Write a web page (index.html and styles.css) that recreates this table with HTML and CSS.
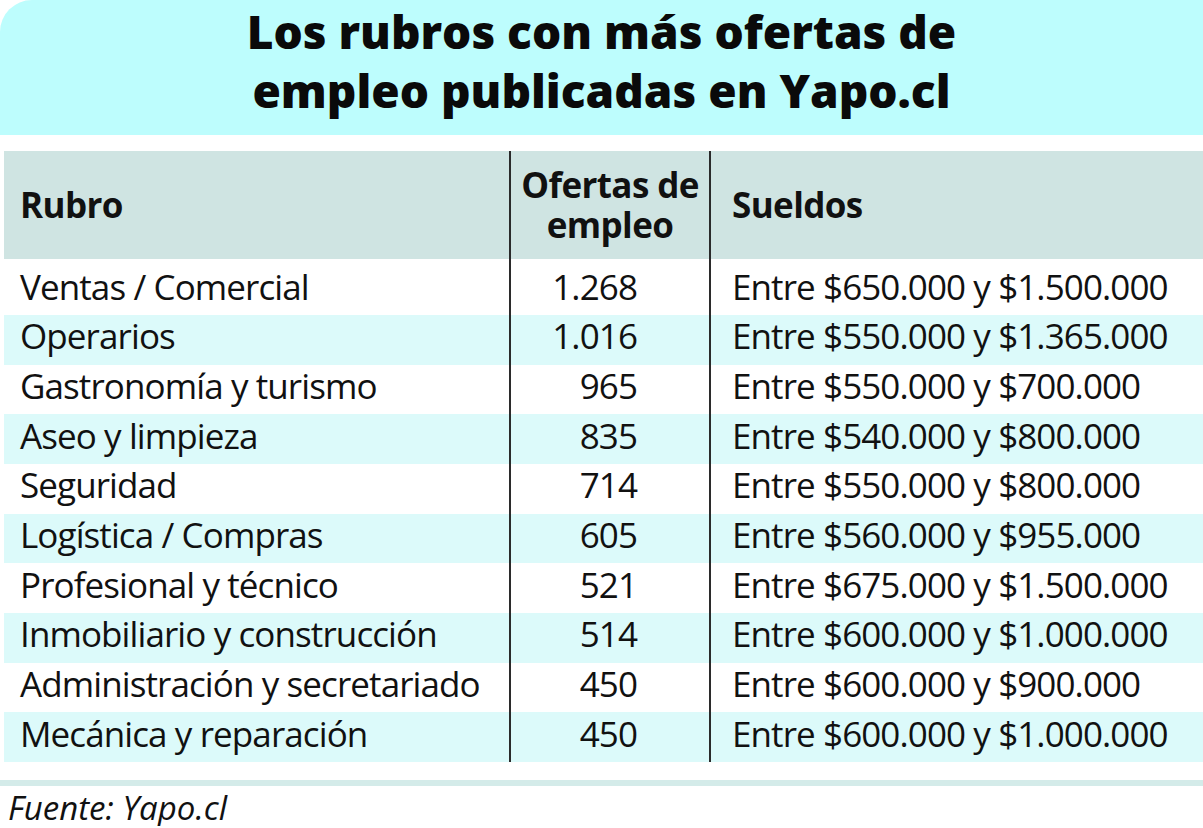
FILE: index.html
```html
<!DOCTYPE html>
<html lang="es">
<head>
<meta charset="utf-8">
<title>Los rubros con más ofertas de empleo publicadas en Yapo.cl</title>
<link rel="stylesheet" href="styles.css">
</head>
<body>
<div class="infographic">
  <header class="title">
    <h1>Los rubros con más ofertas de<br>empleo publicadas en Yapo.cl</h1>
  </header>
  <table class="jobs">
    <colgroup>
      <col class="c-rubro">
      <col class="c-ofertas">
      <col class="c-sueldos">
    </colgroup>
    <thead>
      <tr>
        <th class="rubro">Rubro</th>
        <th class="ofertas">Ofertas de<br>empleo</th>
        <th class="sueldos">Sueldos</th>
      </tr>
    </thead>
    <tbody>
      <tr class="first"><td class="rubro">Ventas / Comercial</td><td class="ofertas">1.268</td><td class="sueldos">Entre $650.000 y $1.500.000</td></tr>
      <tr class="alt"><td class="rubro">Operarios</td><td class="ofertas">1.016</td><td class="sueldos">Entre $550.000 y $1.365.000</td></tr>
      <tr><td class="rubro">Gastronomía y turismo</td><td class="ofertas">965</td><td class="sueldos">Entre $550.000 y $700.000</td></tr>
      <tr class="alt"><td class="rubro">Aseo y limpieza</td><td class="ofertas">835</td><td class="sueldos">Entre $540.000 y $800.000</td></tr>
      <tr><td class="rubro">Seguridad</td><td class="ofertas">714</td><td class="sueldos">Entre $550.000 y $800.000</td></tr>
      <tr class="alt"><td class="rubro">Logística / Compras</td><td class="ofertas">605</td><td class="sueldos">Entre $560.000 y $955.000</td></tr>
      <tr><td class="rubro">Profesional y técnico</td><td class="ofertas">521</td><td class="sueldos">Entre $675.000 y $1.500.000</td></tr>
      <tr class="alt"><td class="rubro">Inmobiliario y construcción</td><td class="ofertas">514</td><td class="sueldos">Entre $600.000 y $1.000.000</td></tr>
      <tr><td class="rubro">Administración y secretariado</td><td class="ofertas">450</td><td class="sueldos">Entre $600.000 y $900.000</td></tr>
      <tr class="alt"><td class="rubro">Mecánica y reparación</td><td class="ofertas">450</td><td class="sueldos">Entre $600.000 y $1.000.000</td></tr>
    </tbody>
  </table>
  <div class="rule"></div>
  <p class="source">Fuente: Yapo.cl</p>
</div>
</body>
</html>
```
FILE: styles.css
```css
html, body {
  margin: 0;
  padding: 0;
  background: #ffffff;
}

body {
  font-family: "Open Sans", "Liberation Sans", sans-serif;
  font-stretch: 90%;
  color: #111111;
}

.infographic {
  width: 1203px;
}

.title {
  background: #bdfdfd;
  border-top-left-radius: 32px;
  height: 135px;
  box-sizing: border-box;
  padding-bottom: 14px;
  display: flex;
  align-items: center;
  justify-content: center;
}

.title h1 {
  margin: 0;
  font-size: 46px;
  font-stretch: 90%;
  line-height: 59px;
  font-weight: 800;
  text-align: center;
  color: #0a0a0a;
}

.jobs {
  margin: 16px 0 0 4px;
  width: 1199px;
  border-collapse: collapse;
  table-layout: fixed;
}

.c-rubro { width: 506px; }
.c-ofertas { width: 200px; }
.c-sueldos { width: 493px; }

.jobs th {
  background: #cfe4e2;
  height: 108px;
  padding: 0;
  font-size: 35px;
  font-stretch: 90%;
  letter-spacing: -0.6px;
  line-height: 40px;
  font-weight: 700;
  text-align: left;
  vertical-align: middle;
}

.jobs th.rubro { padding-left: 16px; }
.jobs th.ofertas { text-align: center; }
.jobs th.sueldos { padding-left: 21px; }

.jobs td {
  height: 49.67px;
  padding: 0 0 7px 0;
  box-sizing: border-box;
  font-size: 35px;
  letter-spacing: -0.9px;
  line-height: 40px;
  vertical-align: middle;
  white-space: nowrap;
}

.jobs tr.first td {
  height: 56px;
  padding-top: 6px;
}

.jobs tr.alt td {
  background: #dcfafa;
}

.jobs td.rubro { padding-left: 16px; }
.jobs td.ofertas { text-align: right; padding-right: 72px; }
.jobs td.sueldos { padding-left: 21px; }

.jobs .ofertas,
.jobs .sueldos {
  border-left: 2px solid #2b2b2b;
}

.rule {
  height: 6px;
  margin-top: 18px;
  background: #d4ebe9;
}

.source {
  margin: 4px 0 0 8px;
  font-size: 33px;
  font-stretch: 100%;
  line-height: 36px;
  font-style: italic;
}
```
